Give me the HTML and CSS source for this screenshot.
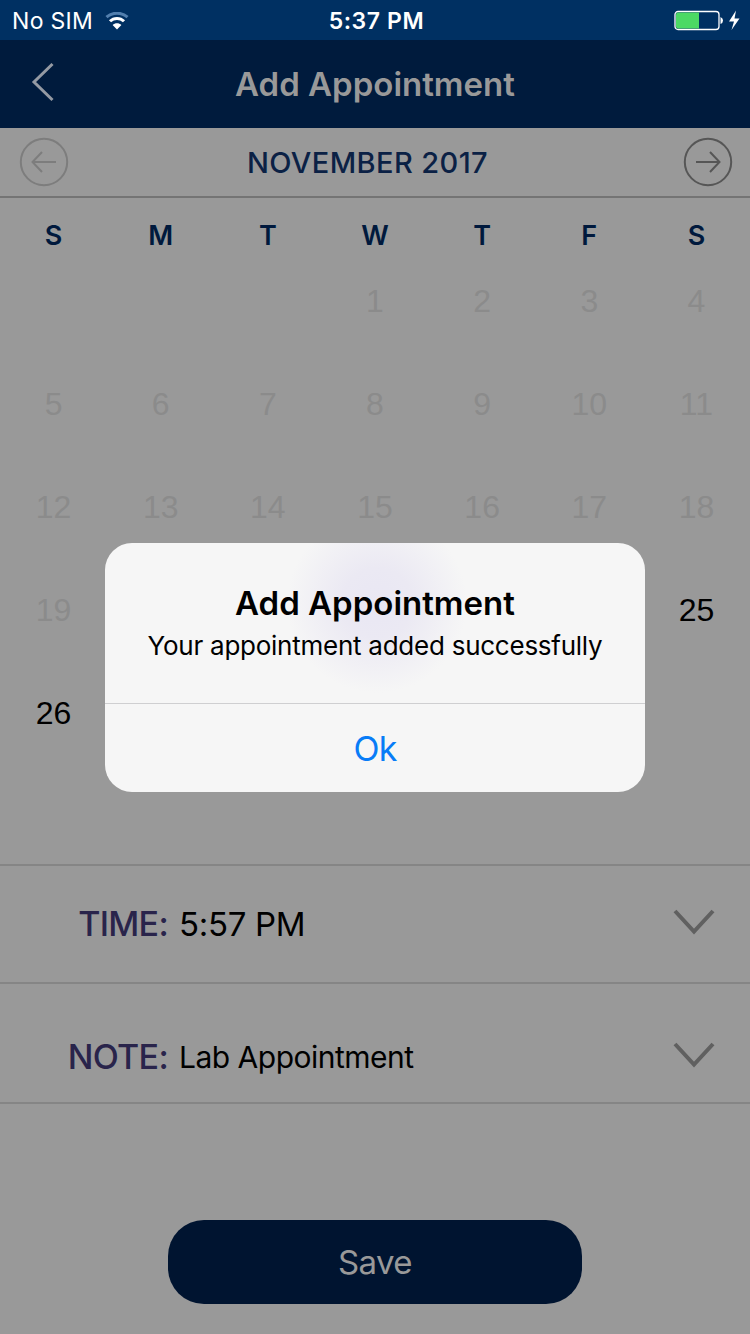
FILE: index.html
```html
<!DOCTYPE html>
<html lang="en">
<head>
<meta charset="utf-8">
<title>Add Appointment</title>
<link rel="stylesheet" href="styles.css">
</head>
<body>
<div class="screen">
  <div class="status">
    <div class="carrier"><span class="carrier-name">No SIM</span>
      <svg class="wifi" width="24" height="18" viewBox="0 0 24 18" fill="none">
        <path d="M1.500 5.200C7.200-.1 16.800-.1 22.500 5.200" stroke="#527fae" stroke-width="3"/>
        <path d="M5 9.300C8.900 5.400 15.100 5.400 19 9.300" stroke="#fff" stroke-width="3"/>
        <path d="M12 17.500 7.600 13C10 10.700 14 10.700 16.400 13Z" fill="#fff"/>
      </svg>
    </div>
    <span class="clock">5:37 PM</span>
    <div class="power">
      <svg width="67" height="22" viewBox="0 0 67 22">
        <rect x="1" y="1.500" width="44" height="18" rx="3" fill="none" stroke="#fff" stroke-width="1.300"/>
        <path d="M4 2.500H25V18.500H4Q2 18.500 2 16.500V4.500Q2 2.500 4 2.500Z" fill="#4cd964"/>
        <path d="M46.500 7Q49 8 49 10.500T46.500 14Z" fill="#fff"/>
        <path d="M62 .5 55 11.500H60L57.500 20 65.500 8.500H60.500Z" fill="#fff"/>
      </svg>
    </div>
  </div>

  <div class="navbar">
    <svg class="back" width="24" height="40" viewBox="0 0 24 40"><path d="M21.500 2 3 20 21.500 38" fill="none" stroke="#949aa3" stroke-width="3"/></svg>
    <h1 class="nav-title"><span>Add Appointment</span></h1>
  </div>

  <div class="month">
    <svg class="arrow arrow-off" width="50" height="50" viewBox="0 0 50 50"><circle cx="25" cy="25" r="23.200"/><path d="M37 25H14M23 15 13.500 25 23 35"/></svg>
    <span class="month-name">NOVEMBER 2017</span>
    <svg class="arrow" width="50" height="50" viewBox="0 0 50 50"><circle cx="25" cy="25" r="23.200"/><path d="M13 25H36M27 15 36.500 25 27 35"/></svg>
  </div>

  <div class="weekdays"><span>S</span><span>M</span><span>T</span><span>W</span><span>T</span><span>F</span><span>S</span></div>
  <div class="days">
    <span></span><span></span><span></span><span>1</span><span>2</span><span>3</span><span>4</span>
    <span>5</span><span>6</span><span>7</span><span>8</span><span>9</span><span>10</span><span>11</span>
    <span>12</span><span>13</span><span>14</span><span>15</span><span>16</span><span>17</span><span>18</span>
    <span>19</span><span></span><span></span><span></span><span></span><span></span><span class="open">25</span>
    <span class="open">26</span><span></span><span></span><span></span><span></span><span></span><span></span>
  </div>

  <div class="field time">
    <span class="label">TIME:</span><span class="value time-value">5:57 PM</span>
    <svg class="chevron" width="42" height="28" viewBox="0 0 42 28"><path d="M2 2 21 22.500 40 2"/></svg>
  </div>
  <div class="field note">
    <span class="label note-label">NOTE:</span><span class="value note-value">Lab Appointment</span>
    <svg class="chevron" width="42" height="28" viewBox="0 0 42 28"><path d="M2 2 21 22.500 40 2"/></svg>
  </div>

  <div class="footer"><div class="save"><span>Save</span></div></div>

  <div class="alert">
    <div class="alert-body">
      <div class="alert-title"><span>Add Appointment</span></div>
      <div class="alert-text"><span>Your appointment added successfully</span></div>
    </div>
    <div class="alert-ok"><span>Ok</span></div>
  </div>
</div>
</body>
</html>
```
FILE: styles.css
```css
* { box-sizing: border-box; }
body { margin: 0; font-family: Inter, "Liberation Sans", sans-serif; }
.screen { position: relative; width: 750px; height: 1334px; overflow: hidden; background: #999; display: flex; flex-direction: column; }

.status { height: 40px; flex: none; background: #003062; color: #fff; display: grid; grid-template-columns: 1fr auto 1fr; align-items: center; padding: 1px 9px 0 12px; font-size: 23px; line-height: 40px; }
.carrier { display: flex; align-items: center; gap: 12px; }
.carrier-name { letter-spacing: .3px; }
.clock { font-weight: 600; letter-spacing: .6px; }
.power { display: flex; justify-content: flex-end; }

.navbar { height: 88px; flex: none; background: #001b3d; display: grid; grid-template-columns: 60px 1fr 60px; align-items: center; }
.back { margin: -4px 0 0 31px; }
.nav-title { margin: 0; text-align: center; font-size: 33px; font-weight: 600; line-height: 88px; color: #999; }

.month { height: 70px; flex: none; border-bottom: 2px solid #747474; display: flex; align-items: center; justify-content: space-between; padding: 0 17px 0 19px; }
.month-name { margin-right: 17px; font-size: 29px; font-weight: 500; letter-spacing: .4px; color: #0b2145; }
.arrow { fill: none; stroke: #565656; stroke-width: 2; }
.arrow-off { stroke: #7d7d7d; }

.weekdays, .days { display: grid; grid-template-columns: repeat(7, 1fr); text-align: center; }
.weekdays { height: 51px; flex: none; line-height: 76px; font-size: 27px; font-weight: 600; color: #00193d; }
.days { height: 615px; flex: none; grid-auto-rows: 103px; font-family: "Liberation Sans", Arial, sans-serif; font-size: 32px; line-height: 104px; color: #8b8b8b; }
.days .open { color: #000; }

.field { flex: none; border-top: 2px solid #858585; display: grid; grid-template-columns: 168px 1fr auto; align-items: center; padding-right: 35px; }
.time { height: 118px; padding-bottom: 1px; }
.note { height: 122px; padding-top: 27px; border-bottom: 2px solid #858585; }
.label { text-align: right; font-size: 34px; font-weight: 500; letter-spacing: -.7px; color: #29244b; }
.value { padding-left: 11px; color: #000; }
.time-value { font-size: 33px; letter-spacing: -.3px; }
.note-value { font-size: 30px; letter-spacing: -.5px; }
.chevron { margin-top: -1px; fill: none; stroke: #606060; stroke-width: 4; }

.footer { flex: 1; display: flex; justify-content: center; align-items: flex-end; padding-bottom: 30px; }
.save { width: 414px; height: 84px; border-radius: 36px; background: #001430; color: #999; font-size: 33px; letter-spacing: -.6px; line-height: 85px; text-align: center; }

.alert { position: absolute; left: 105px; top: 543px; width: 540px; height: 249px; border-radius: 27px; background: radial-gradient(circle at 272px 60px, #e9e7f3 0, #ebe9f3 35px, #f6f6f6 90px); text-align: center; color: #000; overflow: hidden; }
.alert-body { height: 160px; padding-top: 39px; }
.alert-title { font-size: 33px; font-weight: 600; line-height: 42px; }
.alert-text { font-size: 26px; letter-spacing: -.25px; line-height: 44px; }
.alert-ok { height: 89px; border-top: 1px solid #cfcfd1; font-size: 34px; letter-spacing: -.8px; line-height: 89px; color: #087cf7; }
```
